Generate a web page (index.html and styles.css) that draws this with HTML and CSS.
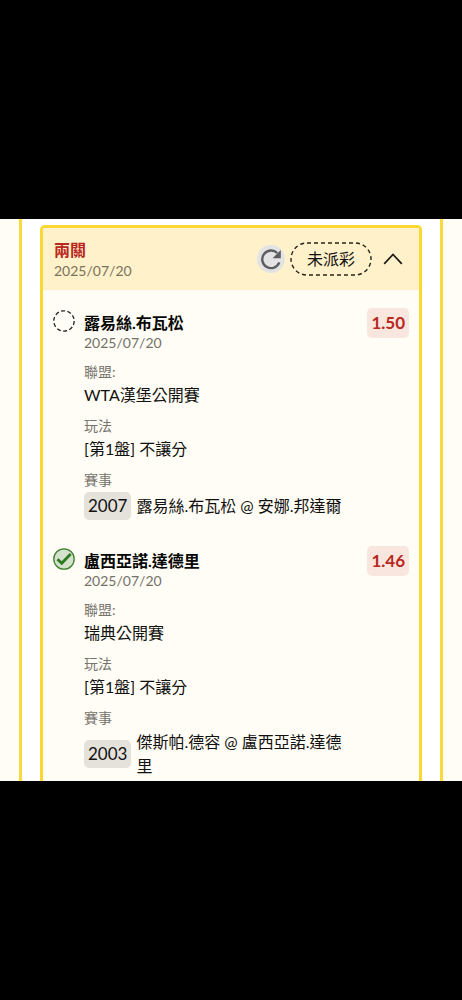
FILE: index.html
```html
<!DOCTYPE html>
<html lang="zh-Hant">
<head>
<meta charset="utf-8">
<meta name="viewport" content="width=device-width, initial-scale=1">
<title>投注紀錄</title>
<link rel="stylesheet" href="styles.css">
</head>
<body>
<main class="screen">
  <div class="panel">
    <article class="card">
      <header class="card-header">
        <div class="heading">
          <h1 class="card-title">兩關</h1>
          <time class="date" datetime="2025-07-20">2025/07/20</time>
        </div>
        <button class="refresh" type="button" aria-label="重新整理">
          <svg viewBox="0 0 28 28" width="28" height="28" aria-hidden="true">
            <path d="M22.300 17.400A8.800 8.800 0 1 1 20.200 8" fill="none" stroke="#5c5d60" stroke-width="2.400"/>
            <path d="M23.800 5v8.200h-8.200z" fill="#5c5d60"/>
          </svg>
        </button>
        <span class="status">
          <svg class="status-outline" aria-hidden="true"><rect class="status-rect" rx="16"/></svg>
          未派彩
        </span>
        <button class="toggle" type="button" aria-label="收合">
          <svg viewBox="0 0 20 12" width="20" height="12" aria-hidden="true">
            <path d="M1.200 10.800L10 1.500l8.800 9.300" fill="none" stroke="#1c1a14" stroke-width="1.700"/>
          </svg>
        </button>
      </header>

      <section class="bet">
        <svg class="mark" viewBox="0 0 22 22" width="22" height="22" aria-hidden="true">
          <circle cx="11" cy="11" r="10.2" fill="none" stroke="#222" stroke-width="1.3" stroke-dasharray="4 2.400"/>
        </svg>
        <div class="details">
          <div class="group">
            <h2 class="pick">露易絲.布瓦松</h2>
            <time class="date" datetime="2025-07-20">2025/07/20</time>
          </div>
          <dl class="fields">
            <div class="group"><dt>聯盟:</dt><dd>WTA漢堡公開賽</dd></div>
            <div class="group"><dt>玩法</dt><dd>[第1盤] 不讓分</dd></div>
            <div class="group"><dt>賽事</dt><dd class="match"><span class="code">2007</span><span class="teams">露易絲.布瓦松 @ 安娜.邦達爾</span></dd></div>
          </dl>
        </div>
        <strong class="odds">1.50</strong>
      </section>

      <section class="bet">
        <svg class="mark" viewBox="0 0 22 22" width="22" height="22" aria-hidden="true">
          <circle cx="11" cy="11" r="10.2" fill="#d4e2cb" stroke="#3f8033" stroke-width="1.3"/>
          <path d="M4.500 11.200L8.800 15.300L17.600 6" fill="none" stroke="#2b7a1f" stroke-width="2.800"/>
        </svg>
        <div class="details">
          <div class="group">
            <h2 class="pick">盧西亞諾.達德里</h2>
            <time class="date" datetime="2025-07-20">2025/07/20</time>
          </div>
          <dl class="fields">
            <div class="group"><dt>聯盟:</dt><dd>瑞典公開賽</dd></div>
            <div class="group"><dt>玩法</dt><dd>[第1盤] 不讓分</dd></div>
            <div class="group"><dt>賽事</dt><dd class="match"><span class="code">2003</span><span class="teams">傑斯帕.德容 @ 盧西亞諾.達德里</span></dd></div>
          </dl>
        </div>
        <strong class="odds">1.46</strong>
      </section>
    </article>
  </div>
</main>
</body>
</html>
```

FILE: styles.css
```css
* {
  box-sizing: border-box;
}

body {
  margin: 0;
  min-height: 100vh;
  padding-top: 219px;
  background: #000;
  color: #11110f;
  font-family: Lato, "Noto Sans CJK TC", sans-serif;
  font-size: 16px;
  line-height: 24px;
}

h1, h2, dl, dd {
  margin: 0;
  font-size: inherit;
}

button {
  padding: 0;
  border: 0;
  background: none;
}

svg {
  display: block;
}

.screen {
  padding: 0 19px;
  background: #fffdf5;
}

.panel {
  padding: 6px 18px 0;
  border: solid #fbdb3b;
  border-width: 0 3px;
  background: #fff;
}

.card {
  padding-bottom: 3px;
  border: 3px solid #fbd733;
  border-bottom: 0;
  border-radius: 5px 5px 0 0;
  background: #fffdf5;
}

.card-header {
  display: flex;
  align-items: center;
  padding: 10px 16px 10px 11px;
  background: #fff1ca;
}

.heading {
  flex: 1;
}

.card-title {
  line-height: 24px;
  color: #b82820;
}

.date {
  display: block;
  color: #74716a;
  font-size: 14px;
  line-height: 18px;
}

.card-header .date {
  color: #79715b;
}

.refresh {
  border-radius: 50%;
  background: #e3e3e4;
}

.status {
  position: relative;
  margin-left: 6px;
  padding: 4px 16px;
}

.status-outline {
  position: absolute;
  inset: 0;
  width: 100%;
  height: 100%;
  overflow: visible;
}

.status-rect {
  width: 100%;
  height: 100%;
  fill: none;
  stroke: #26231b;
  stroke-width: 1.4;
  stroke-dasharray: 4 3;
}

.toggle {
  margin-left: 12px;
}

.bet {
  display: flex;
  align-items: flex-start;
  padding: 18px 10px 0;
}

.bet + .bet {
  padding-top: 26px;
}

.mark {
  flex: none;
  margin: 2px 9px 0 0;
}

.details {
  flex: 1;
  padding: 4px 16px 0 0;
}

.pick {
  color: #080807;
  line-height: 22px;
}

.fields {
  display: grid;
  gap: 8px;
  margin-top: 9px;
}

dt {
  color: #77746d;
  font-size: 14px;
  line-height: 22px;
}

.match {
  display: flex;
  align-items: center;
  gap: 5px;
  margin-top: 1px;
}

.code {
  padding: 2px 4px;
  border-radius: 5px;
  background: #e5e2dc;
  font-size: 17px;
}

.teams {
  flex: 1;
}

.odds {
  padding: 3px 4px;
  border-radius: 5px;
  background: #f8e6df;
  color: #b82820;
  font-size: 17px;
}
```
